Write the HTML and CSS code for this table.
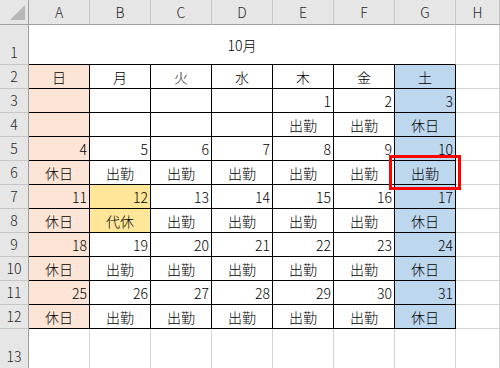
FILE: index.html
```html
<!DOCTYPE html>
<html lang="ja">
<head>
<meta charset="utf-8">
<title>10月 勤務表</title>
<link rel="stylesheet" href="styles.css">
</head>
<body>
<div class="sheet">
  <div class="corner"><span class="tri"></span></div>
  <div class="ch">A</div><div class="ch">B</div><div class="ch">C</div><div class="ch">D</div><div class="ch">E</div><div class="ch">F</div><div class="ch">G</div><div class="ch">H</div>

  <div class="rh">1</div>
  <div class="title">10月</div>
  <div class="g"></div>

  <div class="rh">2</div>
  <div class="c ctr sun">日</div><div class="c ctr">月</div><div class="c ctr">火</div><div class="c ctr">水</div><div class="c ctr">木</div><div class="c ctr">金</div><div class="c ctr sat">土</div>
  <div class="g"></div>

  <div class="rh">3</div>
  <div class="c sun"></div><div class="c"></div><div class="c"></div><div class="c"></div><div class="c num">1</div><div class="c num">2</div><div class="c num sat">3</div>
  <div class="g"></div>

  <div class="rh">4</div>
  <div class="c sun"></div><div class="c"></div><div class="c"></div><div class="c"></div><div class="c ctr">出勤</div><div class="c ctr">出勤</div><div class="c ctr sat">休日</div>
  <div class="g"></div>

  <div class="rh">5</div>
  <div class="c num sun">4</div><div class="c num">5</div><div class="c num">6</div><div class="c num">7</div><div class="c num">8</div><div class="c num">9</div><div class="c num sat">10</div>
  <div class="g"></div>

  <div class="rh">6</div>
  <div class="c ctr sun">休日</div><div class="c ctr">出勤</div><div class="c ctr">出勤</div><div class="c ctr">出勤</div><div class="c ctr">出勤</div><div class="c ctr">出勤</div><div class="c ctr sat marked">出勤</div>
  <div class="g"></div>

  <div class="rh">7</div>
  <div class="c num sun">11</div><div class="c num sub">12</div><div class="c num">13</div><div class="c num">14</div><div class="c num">15</div><div class="c num">16</div><div class="c num sat">17</div>
  <div class="g"></div>

  <div class="rh">8</div>
  <div class="c ctr sun">休日</div><div class="c ctr sub">代休</div><div class="c ctr">出勤</div><div class="c ctr">出勤</div><div class="c ctr">出勤</div><div class="c ctr">出勤</div><div class="c ctr sat">休日</div>
  <div class="g"></div>

  <div class="rh">9</div>
  <div class="c num sun">18</div><div class="c num">19</div><div class="c num">20</div><div class="c num">21</div><div class="c num">22</div><div class="c num">23</div><div class="c num sat">24</div>
  <div class="g"></div>

  <div class="rh">10</div>
  <div class="c ctr sun">休日</div><div class="c ctr">出勤</div><div class="c ctr">出勤</div><div class="c ctr">出勤</div><div class="c ctr">出勤</div><div class="c ctr">出勤</div><div class="c ctr sat">休日</div>
  <div class="g"></div>

  <div class="rh">11</div>
  <div class="c num sun">25</div><div class="c num">26</div><div class="c num">27</div><div class="c num">28</div><div class="c num">29</div><div class="c num">30</div><div class="c num sat">31</div>
  <div class="g"></div>

  <div class="rh">12</div>
  <div class="c ctr sun">休日</div><div class="c ctr">出勤</div><div class="c ctr">出勤</div><div class="c ctr">出勤</div><div class="c ctr">出勤</div><div class="c ctr">出勤</div><div class="c ctr sat">休日</div>
  <div class="g"></div>

  <div class="rh">13</div>
  <div class="g"></div><div class="g"></div><div class="g"></div><div class="g"></div><div class="g"></div><div class="g"></div><div class="g"></div><div class="g"></div>
</div>
</body>
</html>
```

FILE: styles.css
```css
html, body {
  margin: 0;
  padding: 0;
  background: #ffffff;
  overflow: hidden;
}

.sheet {
  display: grid;
  grid-template-columns: 29px repeat(7, 61px) 1fr;
  grid-template-rows: 25px 40px repeat(11, 24px) 40px;
  width: 500px;
  height: 368px;
  font-family: "Noto Sans CJK JP", "Noto Sans", sans-serif;
  font-size: 14px;
  font-weight: 300;
  color: #000;
}

.sheet > div {
  box-sizing: border-box;
  min-width: 0;
}

.corner {
  position: relative;
  background: #e6e6e6;
  border-right: 1px solid #9f9f9f;
  border-bottom: 1px solid #9f9f9f;
}

.tri {
  position: absolute;
  right: 3px;
  bottom: 4px;
  width: 0;
  height: 0;
  border-left: 15px solid transparent;
  border-bottom: 15px solid #b7b7b7;
}

.ch {
  background: #e6e6e6;
  border-right: 1px solid #c6c6c6;
  border-bottom: 1px solid #9f9f9f;
  display: flex;
  align-items: center;
  justify-content: center;
  color: #262626;
  line-height: 1;
}

.rh {
  background: #e6e6e6;
  border-right: 1px solid #9f9f9f;
  border-bottom: 1px solid #c6c6c6;
  display: flex;
  align-items: flex-end;
  justify-content: center;
  line-height: 24px;
  color: #262626;
}

.title {
  grid-column: span 7;
  border-right: 1px solid #d4d4d4;
  border-bottom: 1px solid #000;
  display: flex;
  align-items: center;
  justify-content: center;
}

.g {
  border-right: 1px solid #d4d4d4;
  border-bottom: 1px solid #d4d4d4;
}

.c {
  border-right: 1px solid #000;
  border-bottom: 1px solid #000;
  display: flex;
  align-items: center;
  line-height: 1;
  white-space: nowrap;
}

.ctr {
  justify-content: center;
}

.num {
  justify-content: flex-end;
  padding-right: 2px;
}

.sun {
  background: #fce4d6;
}

.sat {
  background: #bdd7ee;
}

.sub {
  background: #ffe699;
}

.marked {
  position: relative;
}

.marked::after {
  content: "";
  position: absolute;
  left: -6px;
  top: -6px;
  width: 72px;
  height: 35px;
  box-sizing: border-box;
  border: 3px solid #ff0000;
}
```
